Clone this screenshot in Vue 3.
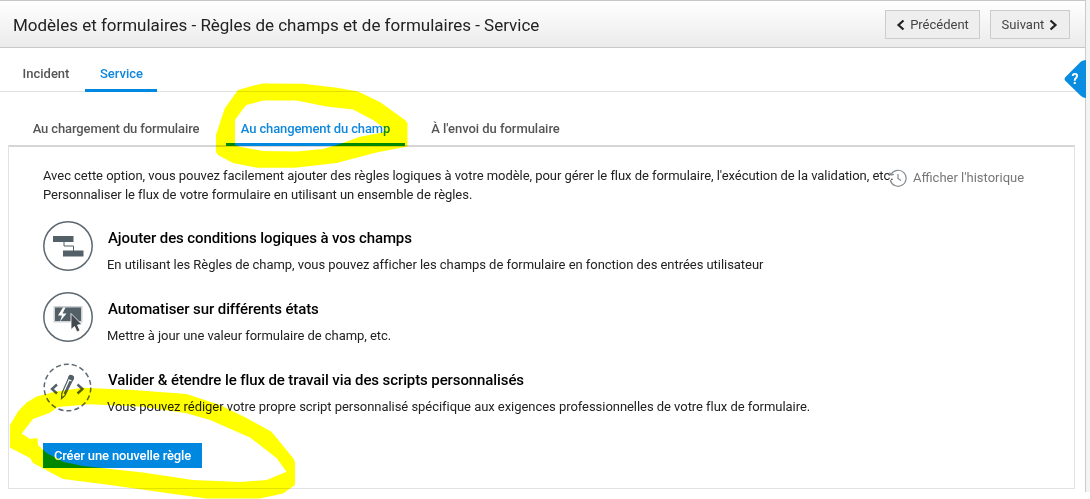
<template>
	<div class="page">
		<header class="header">
			<h1>Modèles et formulaires - Règles de champs et de formulaires - Service</h1>
			<button class="nav prev">
				<svg width="9" height="12" viewBox="0 0 9 12"><path d="M7.500 1.500 2.500 6l5 4.500" /></svg>
				<span>Précédent</span>
			</button>
			<button class="nav next">
				<span>Suivant</span>
				<svg width="9" height="12" viewBox="0 0 9 12"><path d="M1.500 1.500 6.500 6l-5 4.500" /></svg>
			</button>
		</header>

		<nav class="tabs">
			<a v-for="tab in tabs" :key="tab.name" :class="[tab.name, { active: tab.active }]">{{ tab.label }}</a>
		</nav>

		<nav class="subtabs">
			<a v-for="tab in subtabs" :key="tab.name" :class="[tab.name, { active: tab.active }]">{{ tab.label }}</a>
		</nav>

		<main class="panel">
			<div class="intro">
				<p>
					Avec cette option, vous pouvez facilement ajouter des règles logiques à votre modèle, pour gérer le flux de formulaire, l'exécution de la validation, etc.<br />
					Personnaliser le flux de votre formulaire en utilisant un ensemble de règles.
				</p>
				<a class="history">
					<svg width="18" height="18" viewBox="0 0 18 18">
						<path d="M2.200 5.200A8 8 0 1 1 1.300 11M.6 3.500l1.300 2.600 3-.8M9 5v4.500l3 2" />
					</svg>
					<span>Afficher l'historique</span>
				</a>
			</div>

			<section v-for="item in features" :key="item.name" class="feature">
				<svg class="icon" width="50" height="50" viewBox="0 0 50 50">
					<circle v-if="item.name !== 'scripts'" class="ring" cx="25" cy="25" r="24.200" />
					<circle v-else class="ring dashed" cx="24.500" cy="24.500" r="23.300" />
					<g v-if="item.name === 'conditions'">
						<path class="fill" d="M10 15h20.500v6H10zM20 29.500h20.500v6H20z" />
						<path class="line" d="M21 21v4h9.500v5" />
					</g>
					<g v-else-if="item.name === 'states'">
						<path class="halo" d="M10.500 14h29v16.500h-29z" />
						<path class="fill" d="M12 15.500h26V29H12z" />
						<path class="bolt" d="M20 15.500l-5 8h4l-2 6 6.500-8h-4l3-6z" />
						<path class="cursor" d="M28 21.500v16l3.500-3 2.500 5.500 3-1.500-2.500-5.500 4.500-.5z" />
					</g>
					<g v-else>
						<path class="chevron" d="M14 21.500l-5 4.500 5 4.500M34.500 21.500l5 4.500-5 4.500" />
						<path class="pencil" d="M26.500 13c1-1.500 4.500 0 4 2l-8.500 17.500-3.500 3 .3-5z" />
						<path class="fill" d="M26 12.500c1.500-1.500 5.500.3 5 3l-1.200 2.500-5-2.300zM28.500 18.500l-6 13-2-.8 6-13zM18.500 33l2 1-2.200 2z" />
					</g>
				</svg>
				<div>
					<h2>{{ item.title }}</h2>
					<p>{{ item.text }}</p>
				</div>
			</section>

			<button class="create">Créer une nouvelle règle</button>
		</main>

		<svg class="help" width="22" height="38" viewBox="0 0 22 38">
			<path d="M17 1.500Q19 0 22 0v38q-3 0-5-2L1 20.500Q0 19 1 17.500z" />
			<text x="7.500" y="24">?</text>
		</svg>

		<!-- highlighter strokes -->
		<svg class="marker" width="1090" height="499" viewBox="0 0 1090 499">
			<path
				d="M216 135L222.500 115 225 108 238 90 250 86.500 263 83.500 303 83.700 337 87.700 358 91.500 380 102 405 120 407.500 123V146.500L376.500 152.500 336.500 163 295 167.700H256.500L233 163 218 155 216 152z
				M235 120V145L240 146.700 263 151 296.500 151.500 323 149 340 144 360 136.700 383 132.500 385 128.500 373 120 353 109.500 326.500 106.500 296.500 100.500H263L246.500 105 243 109z"
			/>
			<path
				d="M10 425L18 411.500 26 403 36.500 396.500 55 391.700 83 387.700 133 390 186.500 394 220 405 246.500 418 271.500 431.700 293 458 295 462V485L283 493.500 260 498.500H206.500L166.500 493 110 485 63 479 33 463 30 458 10 447.700z
				M21.700 433.500L30 439 37.500 438 38 445 46.500 453 63 461.700 83 466 143 472.500 193 480 240 482 266.500 480 286.500 471.700 276.500 458 250 437.500 210 420 186.500 413.300 143 406.700 90 404.300 58 407 50 412.700 33 419z"
			/>
		</svg>
	</div>
</template>

<script setup>
const tabs = [
	{ name: 'incident', label: 'Incident' },
	{ name: 'service', label: 'Service', active: true },
];

const subtabs = [
	{ name: 'load', label: 'Au chargement du formulaire' },
	{ name: 'change', label: 'Au changement du champ', active: true },
	{ name: 'submit', label: "À l'envoi du formulaire" },
];

const features = [
	{
		name: 'conditions',
		title: 'Ajouter des conditions logiques à vos champs',
		text: 'En utilisant les Règles de champ, vous pouvez afficher les champs de formulaire en fonction des entrées utilisateur',
	},
	{
		name: 'states',
		title: 'Automatiser sur différents états',
		text: 'Mettre à jour une valeur formulaire de champ, etc.',
	},
	{
		name: 'scripts',
		title: 'Valider & étendre le flux de travail via des scripts personnalisés',
		text: 'Vous pouvez rédiger votre propre script personnalisé spécifique aux exigences professionnelles de votre flux de formulaire.',
	},
];
</script>

<style>
body {
	margin: 0;
	background: #fff;
}
</style>

<style scoped>
.page {
	position: relative;
	box-sizing: border-box;
	width: 1090px;
	height: 499px;
	overflow: hidden;
	padding-right: 5px;
	font-family: Roboto, "Liberation Sans", sans-serif;
	font-size: 13px;
	color: #222;
	background: linear-gradient(to right, #ccc 1px, #f4f4f4 1px) no-repeat 1085px 0 / 5px 492px, #fff;
	white-space: nowrap;
}

h1, h2, p {
	margin: 0;
}

svg {
	display: block;
	fill: none;
	flex: none;
}

.header {
	display: flex;
	align-items: center;
	box-sizing: border-box;
	height: 48px;
	padding: 1px 15px 0 13px;
	border-top: 1px solid #c8c8c8;
	border-bottom: 1px solid #c8c8c8;
	background: linear-gradient(#fff, #ebebeb);
}

h1 {
	flex: 1;
	font-size: 17px;
	font-weight: 400;
	letter-spacing: -0.015px;
	color: #222;
}

.nav {
	display: flex;
	align-items: center;
	justify-content: center;
	gap: 5px;
	box-sizing: border-box;
	height: 29px;
	padding: 0;
	border: 1px solid #ccc;
	background: #eee;
	font: 13px Roboto, sans-serif;
	color: #444;
}

.nav path {
	stroke: #222;
	stroke-width: 2.2;
}

.prev {
	width: 95px;
}

.next {
	width: 80px;
	margin-left: 10px;
}

.tabs, .subtabs {
	display: flex;
	box-sizing: border-box;
}

.tabs a, .subtabs a {
	display: flex;
	align-items: center;
	justify-content: center;
	box-sizing: border-box;
	border-bottom: 3px solid transparent;
	font-weight: 500;
	color: #555;
}

.tabs {
	height: 44px;
	padding-left: 7px;
	border-bottom: 1px solid #e2e2e2;
}

.tabs a {
	height: 44px;
	padding-top: 10px;
}

.incident {
	width: 78px;
}

.tabs .service {
	width: 72px;
	padding-left: 1px;
}

.tabs a.active, .subtabs a.active {
	color: #0e87dc;
	border-bottom-color: #0087e0;
}

.subtabs {
	height: 53px;
	padding: 19px 0 0 16px;
	letter-spacing: -0.12px;
}

.subtabs a {
	height: 35px;
	padding-top: 2px;
}

.load {
	width: 200px;
	margin-right: 10px;
}

.change {
	width: 179px;
}

.submit {
	width: 181px;
	letter-spacing: -0.04px;
}

.panel {
	box-sizing: border-box;
	width: 1067px;
	height: 344px;
	margin-left: 8px;
	padding: 19px 0 0 34px;
	border: 1px solid #e2e2e2;
	border-top: 2px solid #d6d6d6;
}

.intro {
	display: flex;
	height: 55px;
	line-height: 19px;
}

.intro p {
	width: 846px;
	letter-spacing: -0.045px;
}

.history {
	display: flex;
	align-items: center;
	gap: 6px;
	height: 23px;
	color: #777;
}

.history path {
	stroke: #858b90;
	stroke-width: 1.200;
}

.feature {
	display: flex;
	gap: 14px;
	height: 71px;
}

.feature h2 {
	padding: 7px 0 0 1px;
	font-size: 15px;
	font-weight: 500;
	line-height: 20px;
	letter-spacing: -0.1px;
	color: #000;
}

.feature p {
	padding-top: 7px;
	line-height: 20px;
	letter-spacing: -0.045px;
}

.ring {
	stroke: #5d6870;
	stroke-width: 1.500;
}

.dashed {
	stroke-dasharray: 5.100 3;
}

.fill {
	fill: #536068;
}

.line {
	stroke: #536068;
}

.halo {
	fill: #ccd0d2;
}

.bolt {
	fill: #fff;
}

.cursor {
	fill: #424a50;
	stroke: #fff;
	stroke-width: .8;
}

.chevron {
	stroke: #536068;
	stroke-width: 2.400;
}

.pencil {
	stroke: #536068;
	stroke-width: 1.200;
}

.create {
	display: flex;
	align-items: center;
	justify-content: center;
	width: 159px;
	height: 25px;
	margin-top: 9px;
	padding: 0;
	border: 0;
	background: #0087e0;
	font: 500 13px Roboto, sans-serif;
	letter-spacing: -0.14px;
	color: #fff;
}

.help {
	position: absolute;
	left: 1064px;
	top: 60px;
	fill: #0a8ce0;
}

.help text {
	fill: #fff;
	font-size: 14px;
	font-weight: 700;
}

.marker {
	position: absolute;
	left: 0;
	top: 0;
	fill: #ff0;
	fill-rule: evenodd;
	mix-blend-mode: multiply;
	pointer-events: none;
}
</style>
